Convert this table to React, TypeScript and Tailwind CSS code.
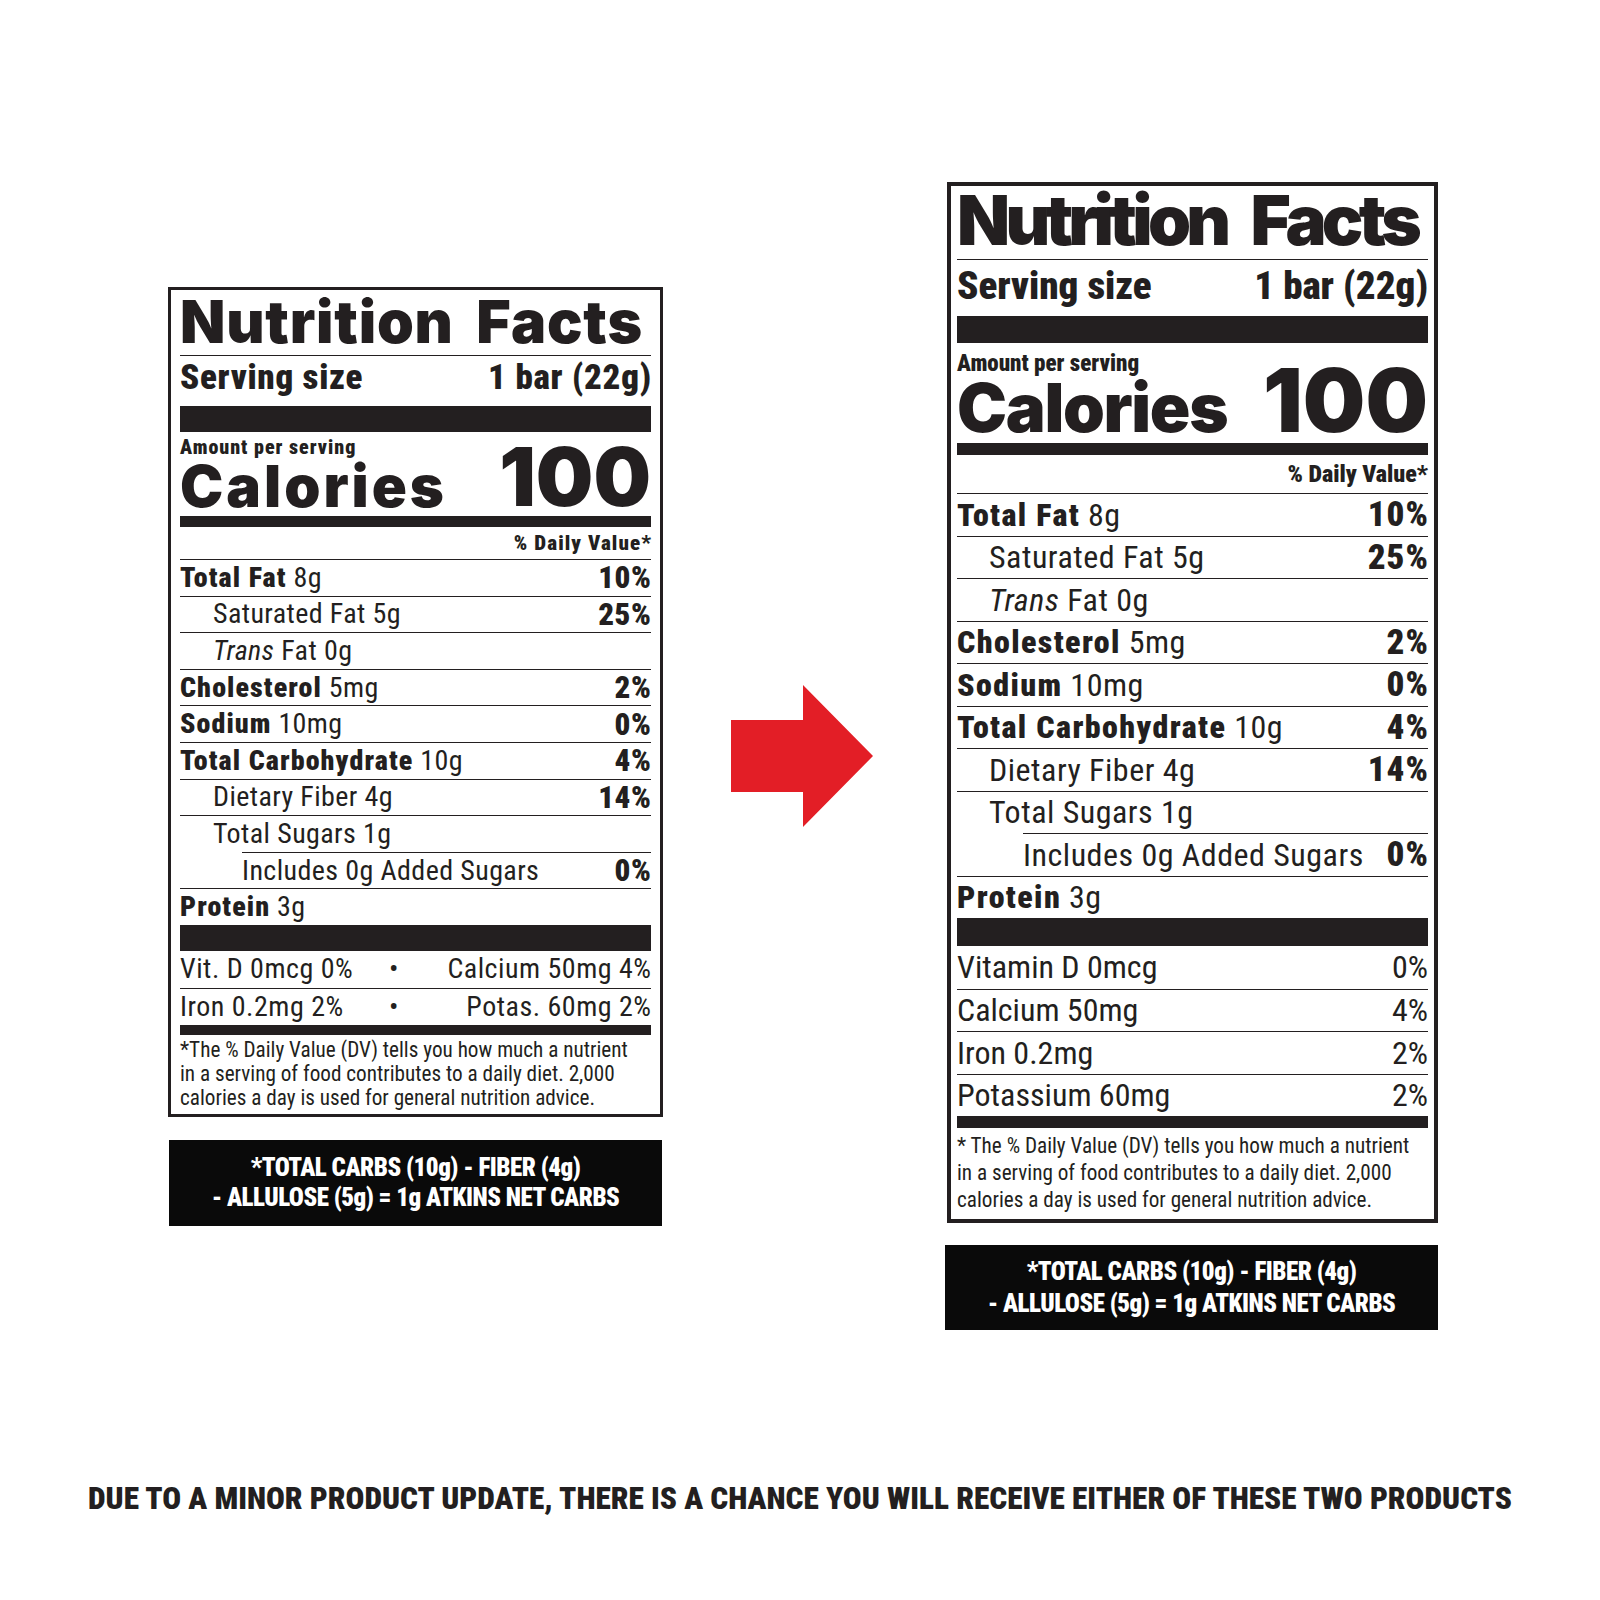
import React from "react";

const NARROW = "font-['Roboto_Condensed','DejaVu_Sans_Condensed','Roboto',sans-serif] font-stretch-condensed";
const HEAVY = "font-['Inter','Liberation_Sans',sans-serif] font-black";

type RowProps = {
  label?: string;
  italic?: string;
  amount: string;
  dv?: string;
  labelClass?: string;
  dvClass?: string;
  pad?: string;
  lineInset?: string;
  h: string;
  text: string;
  line?: boolean;
};

function Row({
  label,
  italic,
  amount,
  dv,
  labelClass = "font-black",
  dvClass = "font-black",
  pad = "",
  lineInset = "",
  h,
  text,
  line = true,
}: RowProps) {
  return (
    <div className={`flex flex-col ${h}`}>
      {line && <div className={`h-px shrink-0 bg-[#231f20] ${lineInset}`} />}
      <div className={`flex flex-1 items-center justify-between whitespace-nowrap leading-none ${text}`}>
        <span className={pad}>
          {label && <span className={labelClass}>{label}</span>}
          {italic && <span className="italic">{italic}</span>}
          {amount}
        </span>
        {dv && <span className={dvClass}>{dv}</span>}
      </div>
    </div>
  );
}

const nutrients = [
  { label: "Total Fat", amount: " 8g", dv: "10%" },
  { amount: "Saturated Fat 5g", dv: "25%", indent: 1 },
  { italic: "Trans", amount: " Fat 0g", indent: 1 },
  { label: "Cholesterol", amount: " 5mg", dv: "2%" },
  { label: "Sodium", amount: " 10mg", dv: "0%" },
  { label: "Total Carbohydrate", amount: " 10g", dv: "4%" },
  { amount: "Dietary Fiber 4g", dv: "14%", indent: 1 },
  { amount: "Total Sugars 1g", indent: 1 },
  { amount: "Includes 0g Added Sugars", dv: "0%", indent: 2 },
  { label: "Protein", amount: " 3g" },
];

function OldLabel() {
  return (
    <div className="w-[495px] border-[3px] border-[#231f20] px-[9px] text-[#231f20]">
      <div className="h-[65px] pt-[2px]">
        <div className={`${HEAVY} text-[59px] leading-none tracking-[0.8px] [word-spacing:10px]`}>Nutrition Facts</div>
      </div>
      <div className="h-px bg-[#231f20]" />
      <div className={`flex h-[50px] items-center justify-between pb-[7px] ${NARROW} text-[35px] font-black leading-none tracking-[0.7px]`}>
        <span>Serving size</span>
        <span className="-mr-[0.7px]">1 bar (22g)</span>
      </div>
      <div className="h-[26px] bg-[#231f20]" />
      <div className="flex h-[84px] items-end justify-between">
        <div className="flex flex-col">
          <span className={`${NARROW} text-[20px] font-black leading-[19px] tracking-[1px]`}>Amount per serving</span>
          <span className={`${HEAVY} mb-[1px] text-[58px] leading-none tracking-[3px]`}>Calories</span>
        </div>
        <span className={`${HEAVY} -mb-[2px] text-[81px] leading-none`}>100</span>
      </div>
      <div className="h-[11px] bg-[#231f20]" />
      <div className={`flex h-[32px] items-center justify-end ${NARROW} text-[21px] font-black leading-none tracking-[1.1px]`}>
        <span className="-mr-[1.1px]">% Daily Value*</span>
      </div>
      {nutrients.map((n) => (
        <Row
          key={n.amount}
          label={n.label}
          italic={n.italic}
          amount={n.amount}
          dv={n.dv}
          labelClass="font-black tracking-[1.1px]"
          dvClass="-mr-[0.6px] text-[31px] font-black tracking-[0.6px]"
          h="h-[36.6px]"
          text={`${NARROW} text-[28px] tracking-[0.4px]`}
          pad={n.indent === 2 ? "pl-[62px]" : n.indent === 1 ? "pl-[33px]" : ""}
          lineInset={n.indent === 2 ? "ml-[62px]" : ""}
        />
      ))}
      <div className="h-[26px] bg-[#231f20]" />
      <div className={`grid h-[37px] grid-cols-[199px_30px_1fr] items-center whitespace-nowrap ${NARROW} text-[28px] leading-none tracking-[0.5px]`}>
        <span>Vit. D 0mcg 0%</span>
        <span className="text-center">•</span>
        <span className="-mr-[0.5px] text-right">Calcium 50mg 4%</span>
      </div>
      <div className="h-px bg-[#231f20]" />
      <div className={`grid h-[36px] grid-cols-[199px_30px_1fr] items-center whitespace-nowrap ${NARROW} text-[28px] leading-none tracking-[0.5px]`}>
        <span>Iron 0.2mg 2%</span>
        <span className="text-center">•</span>
        <span className="-mr-[0.5px] text-right">Potas. 60mg 2%</span>
      </div>
      <div className="h-[10px] bg-[#231f20]" />
      <div className={`h-[79px] whitespace-nowrap pt-[3px] ${NARROW} text-[21.2px] leading-[24px]`}>
        *The % Daily Value (DV) tells you how much a nutrient
        <br />
        in a serving of food contributes to a daily diet. 2,000
        <br />
        calories a day is used for general nutrition advice.
      </div>
    </div>
  );
}

const minerals = [
  { name: "Vitamin D 0mcg", dv: "0%" },
  { name: "Calcium 50mg", dv: "4%" },
  { name: "Iron 0.2mg", dv: "2%" },
  { name: "Potassium 60mg", dv: "2%" },
];

function NewLabel() {
  return (
    <div className="w-[491px] border-4 border-[#231f20] px-[6px] text-[#231f20]">
      <div className="h-[73px]">
        <div className={`${HEAVY} text-[69px] leading-none tracking-[-4.7px] [word-spacing:15px]`}>Nutrition Facts</div>
      </div>
      <div className="h-px bg-[#231f20]" />
      <div className={`flex h-[56px] items-center justify-between pb-[4px] ${NARROW} text-[39px] font-black leading-none`}>
        <span>Serving size</span>
        <span>1 bar (22g)</span>
      </div>
      <div className="h-[27px] bg-[#231f20]" />
      <div className="flex h-[100px] items-end justify-between">
        <div className="flex flex-col">
          <span className={`${NARROW} text-[23px] font-black leading-[21px]`}>Amount per serving</span>
          <span className={`${HEAVY} mb-[2px] text-[67px] leading-none tracking-[-1.3px]`}>Calories</span>
        </div>
        <span className={`${HEAVY} -mb-[1px] text-[88px] leading-none`}>100</span>
      </div>
      <div className="h-[12px] bg-[#231f20]" />
      <div className={`flex h-[38px] items-center justify-end ${NARROW} text-[24px] font-black leading-none`}>
        % Daily Value*
      </div>
      {nutrients.map((n) => (
        <Row
          key={n.amount}
          label={n.label}
          italic={n.italic}
          amount={n.amount}
          dv={n.dv}
          labelClass="font-black tracking-[1.4px]"
          dvClass="-mr-[1px] text-[35px] font-black tracking-[1px]"
          h="h-[42.5px]"
          text={`${NARROW} text-[32px] tracking-[0.5px]`}
          pad={n.indent === 2 ? "pl-[66px]" : n.indent === 1 ? "pl-[32px]" : ""}
          lineInset={n.indent === 2 ? "ml-[66px]" : ""}
        />
      ))}
      <div className="h-[28px] bg-[#231f20]" />
      {minerals.map((m, i) => (
        <Row
          key={m.name}
          amount={m.name}
          dv={m.dv}
          dvClass="font-normal"
          h="h-[42.5px]"
          text={`${NARROW} text-[32px]`}
          line={i > 0}
        />
      ))}
      <div className="h-[12px] bg-[#231f20]" />
      <div className={`h-[91px] whitespace-nowrap pt-[4px] ${NARROW} text-[21.2px] leading-[27px]`}>
        * The % Daily Value (DV) tells you how much a nutrient
        <br />
        in a serving of food contributes to a daily diet. 2,000
        <br />
        calories a day is used for general nutrition advice.
      </div>
    </div>
  );
}

function NetCarbs({ className }: { className: string }) {
  return (
    <div className={`flex flex-col items-center justify-center whitespace-nowrap bg-[#0a0a0a] ${NARROW} text-[25px] font-black tracking-[-0.5px] text-white ${className}`}>
      <span>*TOTAL CARBS (10g) - FIBER (4g)</span>
      <span>- ALLULOSE (5g) = 1g ATKINS NET CARBS</span>
    </div>
  );
}

export default function App() {
  return (
    <div className="flex h-[1600px] w-[1600px] flex-col bg-white">
      <div className="flex h-[1483px] items-start pl-[168px]">
        <div className="mt-[287px] flex flex-col">
          <OldLabel />
          <NetCarbs className="mt-[23px] ml-[1px] h-[86px] w-[493px] leading-[30px]" />
        </div>
        <svg className="mt-[685px] ml-[68px] h-[142px] w-[142px] shrink-0" viewBox="0 0 142 142">
          <polygon points="0,35 72,35 72,0 142,71 72,142 72,107 0,107" fill="#e31e26" />
        </svg>
        <div className="mt-[182px] ml-[74px] flex flex-col">
          <NewLabel />
          <NetCarbs className="mt-[22px] -ml-[2px] h-[85px] w-[493px] leading-[32px]" />
        </div>
      </div>
      <p className={`whitespace-nowrap text-center ${NARROW} text-[31.3px] font-black leading-none text-[#231f20]`}>
        DUE TO A MINOR PRODUCT UPDATE, THERE IS A CHANCE YOU WILL RECEIVE EITHER OF THESE TWO PRODUCTS
      </p>
    </div>
  );
}
